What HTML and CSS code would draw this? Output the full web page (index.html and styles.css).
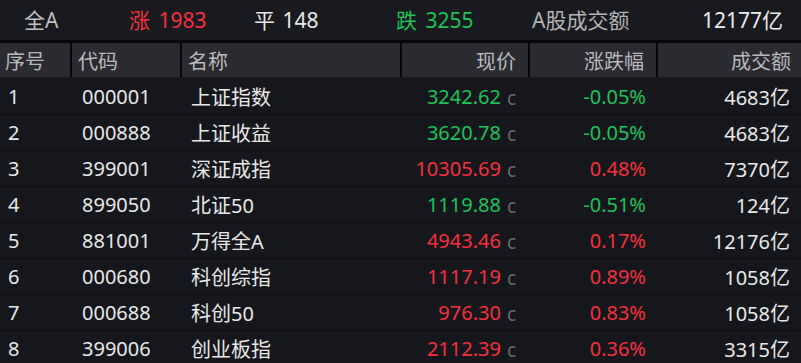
FILE: index.html
```html
<!DOCTYPE html>
<html lang="zh-CN">
<head>
<meta charset="utf-8">
<title>指数行情</title>
<link rel="stylesheet" href="styles.css">
</head>
<body>
<div class="summary">
  <span class="s-item s-all">全A</span>
  <span class="s-item s-up up">涨 1983</span>
  <span class="s-item s-flat">平 148</span>
  <span class="s-item s-down down">跌 3255</span>
  <span class="s-item s-label">A股成交额</span>
  <span class="s-item s-total">12177亿</span>
</div>
<div class="grid">
  <div class="hd c1">序号</div>
  <div class="hd c2">代码</div>
  <div class="hd c3">名称</div>
  <div class="hd c4 r">现价</div>
  <div class="hd c5 r">涨跌幅</div>
  <div class="hd c6 r">成交额</div>

  <div class="cell c1">1</div><div class="cell c2">000001</div><div class="cell c3">上证指数</div>
  <div class="cell c4 r down">3242.62<span class="cc">c</span></div><div class="cell c5 r down">-0.05%</div><div class="cell c6 r">4683亿</div>

  <div class="cell c1">2</div><div class="cell c2">000888</div><div class="cell c3">上证收益</div>
  <div class="cell c4 r down">3620.78<span class="cc">c</span></div><div class="cell c5 r down">-0.05%</div><div class="cell c6 r">4683亿</div>

  <div class="cell c1">3</div><div class="cell c2">399001</div><div class="cell c3">深证成指</div>
  <div class="cell c4 r up">10305.69<span class="cc">c</span></div><div class="cell c5 r up">0.48%</div><div class="cell c6 r">7370亿</div>

  <div class="cell c1">4</div><div class="cell c2">899050</div><div class="cell c3">北证50</div>
  <div class="cell c4 r down">1119.88<span class="cc">c</span></div><div class="cell c5 r down">-0.51%</div><div class="cell c6 r">124亿</div>

  <div class="cell c1">5</div><div class="cell c2">881001</div><div class="cell c3">万得全A</div>
  <div class="cell c4 r up">4943.46<span class="cc">c</span></div><div class="cell c5 r up">0.17%</div><div class="cell c6 r">12176亿</div>

  <div class="cell c1">6</div><div class="cell c2">000680</div><div class="cell c3">科创综指</div>
  <div class="cell c4 r up">1117.19<span class="cc">c</span></div><div class="cell c5 r up">0.89%</div><div class="cell c6 r">1058亿</div>

  <div class="cell c1">7</div><div class="cell c2">000688</div><div class="cell c3">科创50</div>
  <div class="cell c4 r up">976.30<span class="cc">c</span></div><div class="cell c5 r up">0.83%</div><div class="cell c6 r">1058亿</div>

  <div class="cell c1">8</div><div class="cell c2">399006</div><div class="cell c3">创业板指</div>
  <div class="cell c4 r up">2112.39<span class="cc">c</span></div><div class="cell c5 r up">0.36%</div><div class="cell c6 r">3315亿</div>
</div>
</body>
</html>
```
FILE: styles.css
```css
html, body {
  margin: 0;
  padding: 0;
  background: #15171c;
  overflow: hidden;
}
body {
  width: 801px;
  height: 363px;
  font-family: "Noto Sans", "Noto Sans CJK SC", sans-serif;
  font-size: 20px;
  color: #e8e8e8;
}
.up { color: #f5303c; }
.down { color: #1ec256; }

.summary {
  height: 40px;
  background: #181a1f;
  display: flex;
  align-items: center;
  padding-left: 24px;
  border-bottom: 3px solid #07080a;
  box-sizing: content-box;
  white-space: nowrap;
  font-size: 21px;
}
.s-item { line-height: 40px; }
.s-all { width: 105px; color: #bfbfbf; }
.s-up { width: 125px; word-spacing: 3px; }
.s-flat { width: 142px; color: #e8e8e8; word-spacing: 2px; }
.s-down { width: 136px; word-spacing: 3px; }
.s-label { width: 170px; color: #b4b4b4; }
.s-total { color: #ececec; }

.grid {
  display: grid;
  grid-template-columns: 72px 110px 220px 128px 128px 143px;
  grid-auto-rows: 36px;
}
.hd {
  height: 35px;
  background: #2a2a30;
  color: #b9b9bd;
  display: flex;
  align-items: center;
  padding: 0 6px;
  box-sizing: border-box;
  border-right: 2px solid #060608;
  border-bottom: 1px solid #1c1d22;
}
.hd.c6 { border-right: none; padding-right: 10px; }
.hd.c4, .hd.c5 { padding-right: 12px; }
.hd.c1 { padding-left: 5px; }

.cell {
  display: flex;
  align-items: center;
  box-sizing: border-box;
  border-bottom: 1px solid #0c0d10;
  white-space: nowrap;
}
.r { justify-content: flex-end; }
.cell.c1 { padding-left: 8px; }
.cell.c2 { padding-left: 10px; }
.cell.c3 { padding-left: 9px; }
.cell.c4 { padding-right: 14px; }
.cell.c5 { padding-right: 12px; }
.cell.c6 { padding-right: 11px; }
.cc {
  color: #6a6a6e;
  font-size: 19px;
  margin-left: 6px;
  position: relative;
  top: 1px;
}
```
